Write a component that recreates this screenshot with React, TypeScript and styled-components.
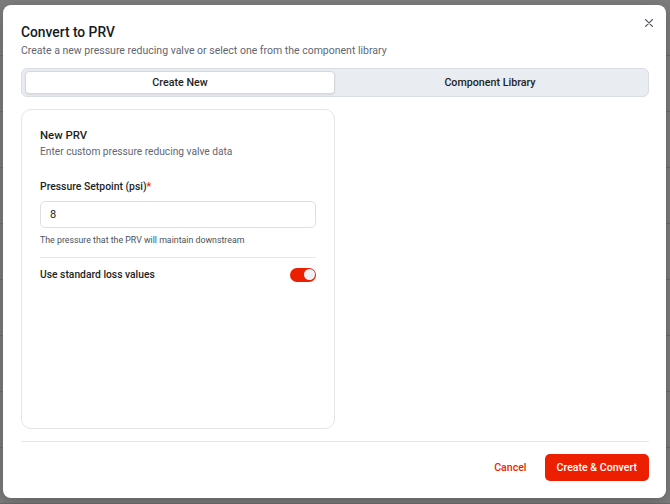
import styled, { createGlobalStyle } from 'styled-components';

const GlobalStyle = createGlobalStyle`
  html, body {
    margin: 0;
    padding: 0;
    background: #7e7e7e;
    font-family: Roboto, "Liberation Sans", sans-serif;
  }
  * { box-sizing: border-box; }
`;

const red = '#ec1f00';

const Backdrop = styled.div`
  width: 670px;
  height: 504px;
  padding: 5px 4px 6px 3px;
  background:
    repeating-linear-gradient(180deg, transparent 0 55px, rgba(60, 60, 60, 0.25) 55px 56px),
    #7e7e7e;
`;

const Dialog = styled.div`
  position: relative;
  height: 100%;
  background: #fff;
  border-radius: 8px;
  box-shadow: 0 4px 18px rgba(0, 0, 0, 0.25);
  padding: 16px 17px 17px 18px;
  display: flex;
  flex-direction: column;
  color: #1b1f26;
`;

const CloseButton = styled.button`
  position: absolute;
  top: 10px;
  right: 9px;
  width: 16px;
  height: 16px;
  padding: 0;
  border: none;
  background: none;
  color: #5a616c;
  display: flex;
  align-items: center;
  justify-content: center;
`;

const Title = styled.h2`
  margin: 0;
  font-size: 13.8px;
  line-height: 22px;
  font-weight: 500;
  color: #151a22;
`;

const Subtitle = styled.p`
  margin: 0;
  font-size: 10.5px;
  line-height: 16px;
  color: #5f6672;
`;

const TabList = styled.div`
  margin-top: 9px;
  display: grid;
  grid-template-columns: 1fr 1fr;
  padding: 2px 3px;
  background: #e9ecf0;
  border: 1px solid #d9dee5;
  border-radius: 6px;
  height: 29px;
`;

const Tab = styled.div<{ $active?: boolean }>`
  display: flex;
  align-items: center;
  justify-content: center;
  font-size: 10.7px;
  font-weight: 500;
  color: #1b1f26;
  border-radius: 4px;
  background: ${(p) => (p.$active ? '#fff' : 'transparent')};
  border: 1px solid ${(p) => (p.$active ? '#d4d9e0' : 'transparent')};
  box-shadow: ${(p) => (p.$active ? '0 1px 2px rgba(0,0,0,0.08)' : 'none')};
`;

const Body = styled.div`
  margin-top: 12px;
  display: grid;
  grid-template-columns: 1fr 1fr;
  flex: 1;
`;

const Card = styled.div`
  border: 1px solid #e1e4e9;
  border-radius: 10px;
  padding: 16px 18px;
  height: 320px;
  display: flex;
  flex-direction: column;
`;

const CardTitle = styled.h3`
  margin: 0;
  font-size: 11.4px;
  line-height: 18px;
  font-weight: 500;
`;

const CardDesc = styled.p`
  margin: 0;
  font-size: 10.2px;
  line-height: 16px;
  color: #5f6672;
`;

const Label = styled.label`
  margin-top: 19px;
  font-size: 10.4px;
  line-height: 16px;
  font-weight: 500;
  color: #1b1f26;

  span { color: ${red}; }
`;

const Input = styled.input`
  margin-top: 6px;
  height: 27px;
  width: 100%;
  border: 1px solid #dce0e6;
  border-radius: 5px;
  padding: 0 9px;
  font-family: inherit;
  font-size: 11px;
  color: #1b1f26;
  outline: none;
`;

const Help = styled.p`
  margin: 5px 0 0;
  font-size: 8.8px;
  line-height: 14px;
  color: #4a515c;
`;

const Divider = styled.hr`
  margin: 10px 0 0;
  border: none;
  border-top: 1px solid #e4e7eb;
`;

const SwitchRow = styled.div`
  margin-top: 9px;
  display: flex;
  align-items: center;
  justify-content: space-between;
  height: 15px;
  font-size: 10.3px;
  font-weight: 500;
`;

const Switch = styled.div<{ $on?: boolean }>`
  width: 26px;
  height: 14px;
  border-radius: 7px;
  background: ${(p) => (p.$on ? red : '#d1d5db')};
  display: flex;
  align-items: center;
  justify-content: ${(p) => (p.$on ? 'flex-end' : 'flex-start')};
  padding: 0 1.5px;

  &::after {
    content: '';
    width: 11px;
    height: 11px;
    border-radius: 50%;
    background: #f1f2f5;
  }
`;

const Footer = styled.div`
  margin-top: 12px;
  border-top: 1px solid #e4e7eb;
  padding-top: 12px;
  display: flex;
  justify-content: flex-end;
  align-items: center;
  gap: 18px;
`;

const Button = styled.button<{ $primary?: boolean }>`
  height: 27px;
  padding: 0 ${(p) => (p.$primary ? '12px' : '0')};
  border-radius: 5px;
  border: none;
  font-family: inherit;
  font-size: 10.6px;
  font-weight: 500;
  background: ${(p) => (p.$primary ? red : 'transparent')};
  color: ${(p) => (p.$primary ? '#fff' : red)};
`;

export default function App() {
  return (
    <>
      <GlobalStyle />
      <Backdrop>
        <Dialog>
          <CloseButton aria-label="Close">
            <svg width="8" height="8" viewBox="0 0 8 8" fill="none" stroke="currentColor" strokeWidth="1.1" strokeLinecap="round">
              <path d="M0.5 0.5l7 7M7.5 0.5l-7 7" />
            </svg>
          </CloseButton>
          <Title>Convert to PRV</Title>
          <Subtitle>Create a new pressure reducing valve or select one from the component library</Subtitle>
          <TabList>
            <Tab $active>Create New</Tab>
            <Tab>Component Library</Tab>
          </TabList>
          <Body>
            <Card>
              <CardTitle>New PRV</CardTitle>
              <CardDesc>Enter custom pressure reducing valve data</CardDesc>
              <Label>
                Pressure Setpoint (psi)<span>*</span>
              </Label>
              <Input defaultValue="8" />
              <Help>The pressure that the PRV will maintain downstream</Help>
              <Divider />
              <SwitchRow>
                Use standard loss values
                <Switch $on />
              </SwitchRow>
            </Card>
          </Body>
          <Footer>
            <Button>Cancel</Button>
            <Button $primary>Create &amp; Convert</Button>
          </Footer>
        </Dialog>
      </Backdrop>
    </>
  );
}
